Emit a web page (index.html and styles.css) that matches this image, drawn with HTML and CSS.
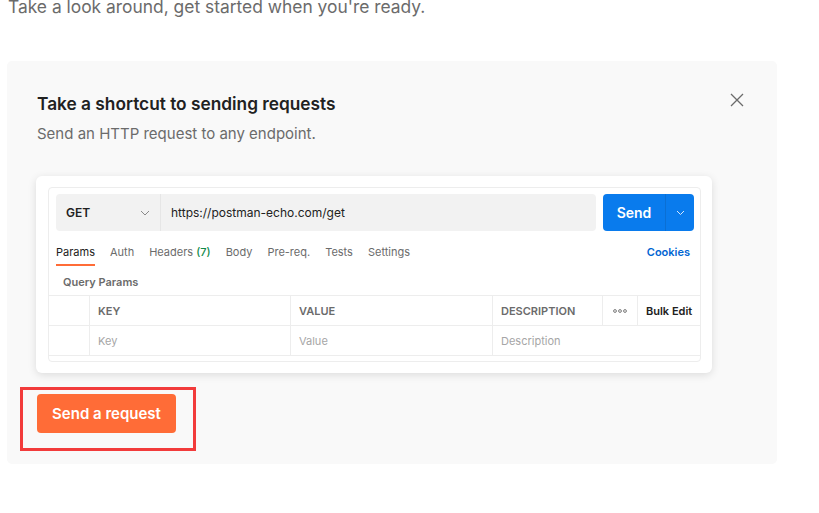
FILE: index.html
```html
<!DOCTYPE html>
<html lang="en">
<head>
    <meta charset="UTF-8">
    <meta name="viewport" content="width=device-width, initial-scale=1.0">
    <title>Get started</title>
    <link rel="stylesheet" href="styles.css">
</head>
<body>
<div class="page">
    <p class="intro">Take a look around, get started when you're ready.</p>

    <div class="panel">
        <div class="panel-header">
            <div>
                <h4 class="panel-title">Take a shortcut to sending requests</h4>
                <p class="panel-subtitle">Send an HTTP request to any endpoint.</p>
            </div>
            <button class="close-btn" aria-label="Close">
                <svg width="16" height="16" viewBox="0 0 16 16">
                    <path d="M2 2L14 14M14 2L2 14" stroke="#6b6b6b" stroke-width="1.3" fill="none"/>
                </svg>
            </button>
        </div>

        <div class="preview">
            <div class="request">
                <div class="url-row">
                    <div class="url-bar">
                        <div class="method">
                            <span>GET</span>
                            <svg width="10" height="6" viewBox="0 0 10 6"><path d="M1 1L5 5L9 1" stroke="#8a8a8a" stroke-width="1" fill="none"/></svg>
                        </div>
                        <div class="url">https://postman-echo.com/get</div>
                    </div>
                    <div class="send">
                        <span class="send-label">Send</span>
                        <span class="send-caret">
                            <svg width="9" height="6" viewBox="0 0 9 6"><path d="M1 1L4.5 4.5L8 1" stroke="#d6e7fb" stroke-width="1" fill="none"/></svg>
                        </span>
                    </div>
                </div>

                <div class="tabs">
                    <span class="tab active">Params</span>
                    <span class="tab">Auth</span>
                    <span class="tab">Headers <b class="count">(7)</b></span>
                    <span class="tab">Body</span>
                    <span class="tab">Pre-req.</span>
                    <span class="tab">Tests</span>
                    <span class="tab">Settings</span>
                    <span class="cookies">Cookies</span>
                </div>

                <div class="section-label">Query Params</div>

                <div class="params-head">
                    <div class="cell"></div>
                    <div class="cell">KEY</div>
                    <div class="cell">VALUE</div>
                    <div class="cell">DESCRIPTION</div>
                    <div class="cell dots">
                        <svg width="14" height="4" viewBox="0 0 14 4">
                            <circle cx="2" cy="2" r="1.4" stroke="#6b6b6b" stroke-width="0.9" fill="none"/>
                            <circle cx="7" cy="2" r="1.4" stroke="#6b6b6b" stroke-width="0.9" fill="none"/>
                            <circle cx="12" cy="2" r="1.4" stroke="#6b6b6b" stroke-width="0.9" fill="none"/>
                        </svg>
                    </div>
                    <div class="cell bulk">Bulk Edit</div>
                </div>
                <div class="params-row">
                    <div class="cell"></div>
                    <div class="cell">Key</div>
                    <div class="cell">Value</div>
                    <div class="cell">Description</div>
                </div>
            </div>
        </div>

        <div class="highlight">
            <button class="primary-btn">Send a request</button>
        </div>
    </div>
</div>
</body>
</html>
```

FILE: styles.css
```css
body {
    margin: 0;
    font-family: Inter, 'Noto Sans', sans-serif;
    background: #fff;
    color: #212121;
}

.page {
    padding: 0 7px;
}

.intro {
    margin: -5px 0 0 1px;
    font-size: 17.4px;
    line-height: 24px;
    color: #6b6b6b;
}

.panel {
    margin-top: 42px;
    width: 770px;
    box-sizing: border-box;
    background: #f9f9f9;
    border-radius: 5px;
    padding: 30px 32px 13px 30px;
}

.panel-header {
    display: flex;
    justify-content: space-between;
    align-items: flex-start;
}

.panel-title {
    margin: 0;
    font-size: 17.3px;
    line-height: 25px;
    font-weight: 600;
    color: #212121;
}

.panel-subtitle {
    margin: 8px 0 0;
    font-size: 15px;
    line-height: 20px;
    color: #6b6b6b;
}

.close-btn {
    margin-top: 1px;
    padding: 0;
    border: none;
    background: none;
    cursor: pointer;
    display: flex;
}

.preview {
    margin: 32px 0 0 -1px;
    width: 676px;
    box-sizing: border-box;
    background: #fff;
    border-radius: 6px;
    box-shadow: 0 2px 8px rgba(0, 0, 0, 0.12);
    padding: 11px 11px 11px 12px;
}

.request {
    border: 1px solid #ededed;
    border-radius: 4px;
    padding-bottom: 5px;
}

.url-row {
    display: flex;
    gap: 7px;
    padding: 6px 6px 0 7px;
}

.url-bar {
    flex: 1;
    display: flex;
    height: 37px;
    background: #f2f2f2;
    border-radius: 4px;
    font-size: 12px;
}

.method {
    width: 105px;
    box-sizing: border-box;
    display: flex;
    align-items: center;
    justify-content: space-between;
    padding: 0 10px 0 10px;
    border-right: 1px solid #e6e6e6;
    font-weight: 600;
    color: #212121;
}

.url {
    display: flex;
    align-items: center;
    padding-left: 10px;
    color: #212121;
}

.send {
    display: flex;
    height: 37px;
    background: #097bed;
    border-radius: 4px;
    color: #fff;
}

.send-label {
    width: 62px;
    display: flex;
    align-items: center;
    justify-content: center;
    font-size: 14px;
    font-weight: 600;
    border-right: 1px solid #0a6fd4;
}

.send-caret {
    width: 28px;
    display: flex;
    align-items: center;
    justify-content: center;
}

.tabs {
    display: flex;
    align-items: flex-start;
    gap: 15px;
    margin-top: 8px;
    padding: 0 10px 0 7px;
    font-size: 11px;
    line-height: 16px;
}

.tab {
    padding: 5px 0 4px;
    border-bottom: 2px solid transparent;
    color: #6b6b6b;
}

.tab.active {
    color: #212121;
    border-bottom-color: #ff6c37;
}

.count {
    font-weight: 500;
    color: #0f8a4a;
}

.cookies {
    margin-left: auto;
    padding-top: 5px;
    font-weight: 600;
    color: #0265d2;
}

.section-label {
    padding: 8px 0 5px 14px;
    font-size: 11px;
    line-height: 16px;
    font-weight: 600;
    color: #6b6b6b;
}

.params-head,
.params-row {
    display: grid;
    border-top: 1px solid #ededed;
    font-size: 11px;
    height: 30px;
    box-sizing: border-box;
}

.params-head {
    grid-template-columns: 40px 201px 202px 110px 35px 1fr;
    font-weight: 600;
    color: #6b6b6b;
}

.params-row {
    grid-template-columns: 40px 201px 202px 1fr;
    border-bottom: 1px solid #ededed;
    height: 31px;
    color: #a6a6a6;
}

.cell {
    display: flex;
    align-items: center;
    padding-left: 8px;
    border-left: 1px solid #ededed;
}

.cell:first-child {
    border-left: none;
}

.cell.dots {
    padding: 0;
    justify-content: center;
}

.cell.bulk {
    color: #212121;
}

.highlight {
    display: inline-flex;
    margin: 14px 0 0 -17px;
    padding: 4px 17px 15px 14px;
    border: 3px solid #f23b3b;
}

.primary-btn {
    width: 139px;
    height: 39px;
    border: none;
    border-radius: 4px;
    background: #ff6c37;
    color: #fff;
    font-family: Inter, 'Noto Sans', sans-serif;
    font-size: 15px;
    font-weight: 600;
    cursor: pointer;
}
```
